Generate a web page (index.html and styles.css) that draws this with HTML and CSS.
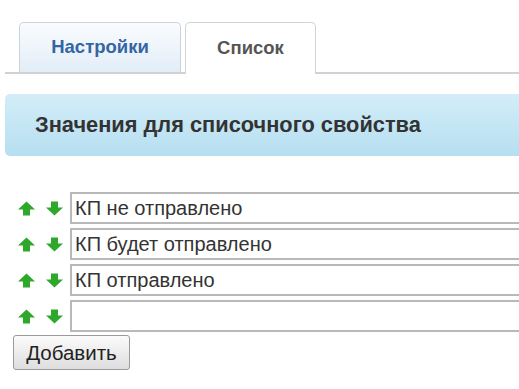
FILE: index.html
```html
<html>
<head>
    <title>Список</title>
    <link rel="stylesheet" href="styles.css">
</head>
<body>
    <div class="tabs">
        <a class="tab tab-inactive" href="#">Настройки</a>
        <a class="tab tab-active" href="#">Список</a>
    </div>
    <div class="heading">
        <h2>Значения для списочного свойства</h2>
    </div>
    <div class="values">
        <div class="value-row">
            <span class="arrow arrow-up"><svg width="17" height="15" viewBox="0 0 17 15"><path d="M8.5 0.5 L17 8.5 L12 8.5 L12 14.5 L5 14.5 L5 8.5 L0 8.5 Z" fill="#2ea82a"/></svg></span>
            <span class="arrow arrow-down"><svg width="17" height="15" viewBox="0 0 17 15"><path d="M8.5 14.5 L17 6.5 L12 6.5 L12 0.5 L5 0.5 L5 6.5 L0 6.5 Z" fill="#2ea82a"/></svg></span>
            <input type="text" class="value-input" value="КП не отправлено">
        </div>
        <div class="value-row">
            <span class="arrow arrow-up"><svg width="17" height="15" viewBox="0 0 17 15"><path d="M8.5 0.5 L17 8.5 L12 8.5 L12 14.5 L5 14.5 L5 8.5 L0 8.5 Z" fill="#2ea82a"/></svg></span>
            <span class="arrow arrow-down"><svg width="17" height="15" viewBox="0 0 17 15"><path d="M8.5 14.5 L17 6.5 L12 6.5 L12 0.5 L5 0.5 L5 6.5 L0 6.5 Z" fill="#2ea82a"/></svg></span>
            <input type="text" class="value-input" value="КП будет отправлено">
        </div>
        <div class="value-row">
            <span class="arrow arrow-up"><svg width="17" height="15" viewBox="0 0 17 15"><path d="M8.5 0.5 L17 8.5 L12 8.5 L12 14.5 L5 14.5 L5 8.5 L0 8.5 Z" fill="#2ea82a"/></svg></span>
            <span class="arrow arrow-down"><svg width="17" height="15" viewBox="0 0 17 15"><path d="M8.5 14.5 L17 6.5 L12 6.5 L12 0.5 L5 0.5 L5 6.5 L0 6.5 Z" fill="#2ea82a"/></svg></span>
            <input type="text" class="value-input" value="КП отправлено">
        </div>
        <div class="value-row">
            <span class="arrow arrow-up"><svg width="17" height="15" viewBox="0 0 17 15"><path d="M8.5 0.5 L17 8.5 L12 8.5 L12 14.5 L5 14.5 L5 8.5 L0 8.5 Z" fill="#2ea82a"/></svg></span>
            <span class="arrow arrow-down"><svg width="17" height="15" viewBox="0 0 17 15"><path d="M8.5 14.5 L17 6.5 L12 6.5 L12 0.5 L5 0.5 L5 6.5 L0 6.5 Z" fill="#2ea82a"/></svg></span>
            <input type="text" class="value-input" value="">
        </div>
        <button class="add-button">Добавить</button>
    </div>
</body>
</html>
```

FILE: styles.css
```css
body {
    margin: 0;
    font-family: "Liberation Sans", Arial, sans-serif;
    background: #fff;
    overflow: hidden;
}
.tabs {
    display: flex;
    align-items: flex-end;
    margin: 22px 0 0 5px;
    padding-left: 14px;
    border-bottom: 2px solid #cfd3d6;
    height: 50px;
}
.tab {
    display: flex;
    align-items: center;
    justify-content: center;
    box-sizing: border-box;
    height: 50px;
    font-size: 18.5px;
    font-weight: bold;
    text-decoration: none;
    border: 1px solid #c9d4de;
    border-bottom: none;
    border-radius: 5px 5px 0 0;
    padding-bottom: 2px;
}
.tab-inactive {
    width: 162px;
    color: #3465a4;
    background: linear-gradient(#fafcfe, #e2edf7);
}
.tab-active {
    width: 131px;
    margin-left: 4px;
    color: #555;
    background: #fff;
    border-color: #d0d4d8;
    height: 52px;
    margin-bottom: -2px;
}
.heading {
    margin: 20px 0 0 5px;
    height: 62px;
    border-radius: 5px 0 0 5px;
    background: linear-gradient(#d3edf8, #b6dff1);
    display: flex;
    align-items: center;
    padding-left: 30px;
}
.heading h2 {
    margin: 0;
    font-size: 21.8px;
    color: #333;
}
.values {
    padding: 34px 0 0 13px;
}
.value-row {
    display: flex;
    align-items: center;
    height: 36px;
}
.arrow {
    display: flex;
    flex-shrink: 0;
    width: 17px;
}
.arrow-up {
    margin-left: 5px;
}
.arrow-down {
    margin-left: 11px;
    margin-right: 7px;
}
.value-input {
    flex-shrink: 0;
    box-sizing: border-box;
    width: 470px;
    height: 32px;
    border: 2px solid #b9b9b9;
    border-right: none;
    padding: 0 3px;
    font-family: "Liberation Sans", Arial, sans-serif;
    font-size: 20px;
    color: #333;
}
.add-button {
    margin-top: 1px;
    width: 117px;
    height: 35px;
    font-family: "Liberation Sans", Arial, sans-serif;
    font-size: 20.5px;
    color: #222;
    border: 1px solid #9a9a9a;
    border-radius: 3px;
    background: linear-gradient(#fbfbfb, #dedede);
    padding: 0;
}
```
